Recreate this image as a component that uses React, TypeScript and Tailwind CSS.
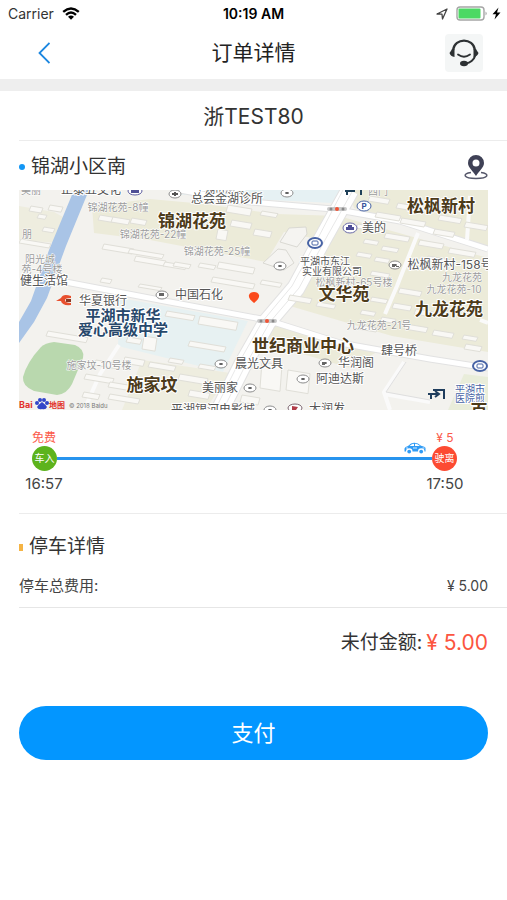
import { clsx } from 'clsx';

type Block = [x: number, y: number, w: number, h: number];

// buildings on the map, all of them lean the same way
const buildings: Block[] = [
  [31, 206, 12, 5], [50, 205, 13, 5], [39, 214, 8, 4], [44, 227, 11, 4],
  [21, 239, 30, 4], [100, 215, 15, 5], [113, 217, 17, 5], [132, 218, 15, 5],
  [104, 244, 30, 5], [130, 249, 34, 4], [136, 256, 30, 5], [165, 262, 22, 4],
  [102, 278, 10, 4], [140, 284, 22, 3], [219, 262, 36, 6], [213, 277, 42, 5],
  [262, 280, 20, 4], [228, 205, 24, 7], [232, 220, 20, 6], [255, 229, 17, 6],
  [262, 211, 16, 4], [218, 229, 10, 10], [175, 262, 16, 4], [200, 263, 16, 4],
  [370, 196, 20, 5], [398, 203, 22, 5], [377, 212, 24, 5], [402, 218, 24, 5],
  [440, 215, 22, 5], [466, 222, 22, 5], [435, 229, 20, 5], [386, 233, 24, 5],
  [358, 224, 14, 4], [365, 239, 14, 4], [383, 246, 16, 4], [358, 252, 14, 4],
  [376, 257, 14, 4], [420, 240, 24, 5], [450, 248, 26, 5], [428, 256, 22, 5],
  [372, 271, 18, 4], [400, 288, 22, 5], [372, 297, 16, 4], [394, 303, 18, 5],
  [416, 309, 20, 5], [362, 310, 14, 4], [382, 317, 14, 4], [406, 324, 22, 5],
  [434, 330, 20, 5], [464, 335, 14, 4], [466, 344, 16, 5], [360, 325, 18, 4],
  [167, 311, 28, 5], [200, 316, 38, 8], [190, 341, 36, 5], [128, 337, 14, 5],
  [48, 331, 40, 5], [144, 336, 13, 13], [96, 360, 24, 5], [125, 357, 20, 6],
  [86, 374, 28, 5], [110, 382, 24, 5], [150, 362, 26, 5], [180, 374, 28, 6],
  [190, 390, 20, 6], [110, 394, 30, 5], [84, 392, 16, 5], [262, 362, 20, 26],
  [288, 370, 22, 20], [242, 395, 18, 7], [170, 358, 14, 4], [200, 364, 16, 4],
  [290, 295, 22, 5], [318, 302, 18, 4],
];

type Label = {
  text: string;
  x: number;
  y: number;
  kind: 'area' | 'school' | 'place' | 'company' | 'block' | 'transit';
};

const labels: Label[] = [
  { text: '正泰五交化', x: 91, y: 194, kind: 'place' },
  { text: '平湖市慈善', x: 220, y: 193, kind: 'company' },
  { text: '总会金湖诊所', x: 227, y: 203, kind: 'place' },
  { text: '西门', x: 378, y: 195, kind: 'block' },
  { text: '美丽', x: 31, y: 194, kind: 'block' },
  { text: '锦湖花苑-8幢', x: 118, y: 211, kind: 'block' },
  { text: '锦湖花苑-22幢', x: 153, y: 238, kind: 'block' },
  { text: '锦湖花苑-25幢', x: 217, y: 255, kind: 'block' },
  { text: '朋', x: 27, y: 238, kind: 'block' },
  { text: '阳光城', x: 40, y: 263, kind: 'block' },
  { text: '苑-4号楼', x: 42, y: 273, kind: 'block' },
  { text: '健生活馆', x: 44, y: 285, kind: 'place' },
  { text: '锦湖花苑', x: 192, y: 227, kind: 'area' },
  { text: '松枫新村', x: 441, y: 212, kind: 'area' },
  { text: '美的', x: 374, y: 232, kind: 'place' },
  { text: '平湖市东江', x: 325, y: 265, kind: 'company' },
  { text: '实业有限公司', x: 332, y: 275, kind: 'company' },
  { text: '松枫新村-158号', x: 450, y: 269, kind: 'place' },
  { text: '九龙花苑', x: 462, y: 281, kind: 'block' },
  { text: '九龙花苑-10', x: 454, y: 293, kind: 'block' },
  { text: '松枫新村-65号楼', x: 354, y: 286, kind: 'block' },
  { text: '文华苑', x: 344, y: 300, kind: 'area' },
  { text: '九龙花苑', x: 449, y: 315, kind: 'area' },
  { text: '九龙花苑-21号', x: 379, y: 329, kind: 'block' },
  { text: '中国石化', x: 199, y: 299, kind: 'place' },
  { text: '华夏银行', x: 103, y: 305, kind: 'place' },
  { text: '平湖市新华', x: 123, y: 321, kind: 'school' },
  { text: '爱心高级中学', x: 123, y: 335, kind: 'school' },
  { text: '世纪商业中心', x: 303, y: 352, kind: 'area' },
  { text: '肆号桥', x: 399, y: 355, kind: 'place' },
  { text: '晨光文具', x: 259, y: 368, kind: 'place' },
  { text: '华润阁', x: 356, y: 367, kind: 'place' },
  { text: '阿迪达斯', x: 340, y: 383, kind: 'place' },
  { text: '施家坟-10号楼', x: 99, y: 369, kind: 'block' },
  { text: '施家坟', x: 152, y: 391, kind: 'area' },
  { text: '美丽家', x: 220, y: 392, kind: 'place' },
  { text: '平湖市', x: 470, y: 393, kind: 'transit' },
  { text: '医院煎', x: 470, y: 402, kind: 'transit' },
  { text: '平湖银河电影城', x: 213, y: 414, kind: 'place' },
  { text: '大润发', x: 327, y: 413, kind: 'place' },
  { text: '百', x: 479, y: 417, kind: 'area' },
];

const pois = [
  [175, 194], [287, 193], [280, 266], [395, 265], [162, 295],
  [221, 364], [325, 363], [303, 379], [250, 388], [270, 410],
];

const stations = [[315, 243], [480, 366]];

function MapView() {
  return (
    <svg
      viewBox="19 190 469 220"
      className="block w-full"
      role="img"
      aria-label="锦湖小区南地图"
    >
      <rect x="19" y="190" width="469" height="220" fill="#f3f2ee" />
      <path d="M170 190H342L333 203L250 199L170 194Z" fill="#e6f1f3" />
      <path d="M92 206L150 199L205 204L276 214L340 216L312 238L284 232L266 262L150 240L94 233Z" fill="#ecebd9" />
      <path d="M348 190H488V248L354 208ZM335 215L488 258V352L392 336L290 306Z" fill="#ecebd9" />
      <path d="M19 206L54 212L72 222L58 243L19 240Z" fill="#eeeddf" />
      <path d="M120 298L248 321L223 372L118 346Z" fill="#e7f1f2" />
      <path d="M276 325L380 350L350 368L262 342Z" fill="#ecebd9" />
      <path d="M142 360L230 373L205 410H122Z" fill="#eeeddf" />
      <path d="M464 374L488 377V410H448Z" fill="#e9edda" />

      <path d="M74 190H89L66 246L47 298L34 322L19 343V322L31 301L49 250Z" fill="#a9c4e6" />
      <path d="M41 347Q45 343 54 342L75 345Q85 349 83 358L72 384Q67 394 57 395L34 391Q22 386 23 377Q27 362 41 347Z" fill="#b9d8ae" />

      <g fill="none" strokeLinejoin="round">
        <path d="M350 190L322 240L296 288L267 322L242 366L220 410" stroke="#e2e2e2" strokeWidth="19" />
        <path d="M50 279L170 302L267 320L340 343L430 359L488 368M180 190L240 201L333 209L400 221L488 249" stroke="#e2e2e2" strokeWidth="7" />
        <path d="M350 190L322 240L296 288L267 322L242 366L220 410" stroke="#fff" strokeWidth="17" />
        <path d="M50 279L170 302L267 320L340 343L430 359L488 368M180 190L240 201L333 209L400 221L488 249" stroke="#fff" strokeWidth="5" />
        <path d="M353 190L325 240L299 288L270 322L245 366L223 410" stroke="#e8e8e8" strokeWidth="1" />
        <path d="M343 190L317 240L292 286L262 322L237 366L215 410" stroke="#e8e8e8" strokeWidth="1" />
        <path d="M418 233L397 286L385 314M470 196L467 240M404 362L384 392L390 410M480 320L488 323M384 394L430 402M119 345L100 374L84 410" stroke="#fafafa" strokeWidth="4" />
        <path d="M406 362L386 392L430 400" stroke="#dfdfdf" strokeWidth="1" />
      </g>
      <path d="M289 228L306 227L307 234L297 247L280 242ZM278 249L286 250L294 263L284 270L263 263Z" fill="#f5f4f1" stroke="#dad9d3" />

      <g fill="#f9f8f5" stroke="#e0dfd8" strokeWidth="1">
        {buildings.map(([x, y, w, h]) => (
          <path key={`${x}-${y}`} d={`M${x} ${y}l${w} ${w / 6}l-2 ${h}l-${w} -${w / 6}z`} />
        ))}
      </g>

      {pois.map(([x, y]) => (
        <g key={`${x}-${y}`}>
          <ellipse cx={x} cy={y} rx="6" ry="4" fill="#fff" stroke="#8c8c8c" />
          <ellipse cx={x} cy={y} rx="2" ry="1" fill="#555" />
        </g>
      ))}
      <path d="M172 194H178M175 192V196" stroke="#555" strokeWidth="2" />
      <path d="M392 264h3v3h-3zM396 266h3v1h-3zM159 293h5v3h-5zM322 362h3v3h-3z" fill="#666" />

      {stations.map(([x, y]) => (
        <g key={`${x}-${y}`}>
          <ellipse cx={x} cy={y} rx="7" ry="5" fill="#fff" stroke="#4763a5" strokeWidth="2" />
          <rect x={x - 3} y={y - 2} width="6" height="4" rx="1" fill="none" stroke="#4763a5" />
        </g>
      ))}

      <ellipse cx="364" cy="206" rx="7" ry="5" fill="#fff" stroke="#4763a5" />
      <text x="364" y="209" textAnchor="middle" className="fill-[#35539b] text-[8px] font-bold">P</text>
      <ellipse cx="350" cy="228" rx="7" ry="5" fill="#fff" stroke="#6a6aa8" />
      <path d="M346 227h8v3h-8zM348 225h4v2h-4z" fill="#4e4e96" />
      <ellipse cx="135" cy="191" rx="7" ry="4" fill="#fff" stroke="#5d5da0" />
      <path d="M131 190h8v3h-8z" fill="#4e4e96" />
      <ellipse cx="295" cy="408" rx="7" ry="4" fill="#fff" stroke="#7c6670" />
      <path d="M292 406l6 1l-2 3h-4z" fill="#b23c48" />

      {[[337, 209], [267, 321]].map(([x, y]) => (
        <g key={x}>
          <rect x={x - 10} y={y - 2} width="20" height="4" rx="2" fill="#c9c9c9" />
          <circle cx={x - 6} cy={y} r="1.5" fill="#8a8a8a" />
          <circle cx={x} cy={y} r="2" fill="#f05436" />
          <circle cx={x + 6} cy={y} r="1.5" fill="#8a8a8a" />
        </g>
      ))}

      <path d="M71 296Q63 293 61 298L56 301H61Q62 306 71 305V303Q65 303 65 300Q65 298 71 298Z" fill="#e8502e" />
      <path d="M66 299h5v3h-5z" fill="#8a3a24" />
      <path d="M345 191h10M347 191v4M361 190v5" stroke="#1f4058" strokeWidth="2" />
      <path d="M433 390H444V399M428 394H438M435 391L439 394L435 397M431 394V399" fill="none" stroke="#1f3d5c" strokeWidth="2" />

      <g textAnchor="middle" stroke="#fff" paintOrder="stroke" strokeLinejoin="round">
        {labels.map(({ text, x, y, kind }) => (
          <text
            key={`${text}-${y}`}
            x={x}
            y={y}
            strokeWidth={kind === 'block' ? 1 : 2}
            className={clsx(
              kind === 'area' && 'fill-[#4d3b1a] text-[17px] font-bold',
              kind === 'school' && 'fill-[#27486b] text-[15px] font-bold',
              kind === 'place' && 'fill-[#555] text-[12px]',
              kind === 'company' && 'fill-[#555] text-[10px]',
              kind === 'block' && 'fill-[#9b9b9b] text-[10px]',
              kind === 'transit' && 'fill-[#4763a5] text-[10px]',
            )}
          >
            {text}
          </text>
        ))}
      </g>

      <path d="M254 303Q248 298 249 295Q250 292 254 292Q258 292 259 295Q260 298 254 303Z" fill="#fb4a1c" />

      <text x="19" y="408" className="fill-[#e2322b] text-[9px] font-bold">Bai</text>
      <g fill="#3347c9">
        <ellipse cx="37" cy="403" rx="2" ry="2" />
        <ellipse cx="40" cy="400" rx="2" ry="2" />
        <ellipse cx="44" cy="400" rx="2" ry="2" />
        <ellipse cx="47" cy="403" rx="2" ry="2" />
        <path d="M42 402Q46 405 47 407Q46 410 42 409Q38 410 37 407Q38 405 42 402Z" />
      </g>
      <text x="49" y="408" className="fill-[#e2322b] text-[8px] font-bold">地图</text>
      <text x="69" y="408" className="fill-[#777] text-[6px]">© 2018 Baidu</text>
    </svg>
  );
}

function StatusBar() {
  return (
    <div className="flex h-[27px] items-center px-2 text-[14px] text-black">
      <div className="flex flex-1 items-center gap-2">
        <span className="text-[#333]">Carrier</span>
        <svg viewBox="0 0 18 13" className="h-[13px] w-[18px]" aria-hidden="true">
          <g fill="none" stroke="#000" strokeWidth="2.4">
            <path d="M1.2 4.8Q9 -1.8 16.8 4.8" />
            <path d="M4 7.8Q9 3.4 14 7.8" />
          </g>
          <path d="M6 9.8Q9 7.4 12 9.8L9 12.8Z" />
        </svg>
      </div>
      <span className="font-semibold">10:19 AM</span>
      <div className="flex flex-1 items-center justify-end">
        <svg viewBox="0 0 12 12" className="mr-2 h-3 w-3" aria-hidden="true">
          <path d="M1 6L11 1L6.5 11L6 6.2Z" fill="none" stroke="#444" strokeWidth="1.3" strokeLinejoin="round" />
        </svg>
        <svg viewBox="0 0 32 15" className="h-[15px] w-8" aria-hidden="true">
          <rect x="1" y="1" width="27" height="13" rx="3" fill="#fff" stroke="#a5a5a5" strokeWidth="1.4" />
          <rect x="2.5" y="2.5" width="22" height="10" rx="1" fill="#4cd964" />
          <path d="M29.5 5.5Q32 7.5 29.5 9.5Z" fill="#a5a5a5" />
        </svg>
        <svg viewBox="0 0 9 13" className="ml-1 -mr-[2px] h-[13px] w-[9px]" aria-hidden="true">
          <path d="M6.5 0.5L0.5 7.3H4L2.5 12.5L8.5 5.5H5Z" />
        </svg>
      </div>
    </div>
  );
}

function HeadsetIcon() {
  return (
    <svg viewBox="0 0 30 28" className="h-7 w-[30px]" aria-hidden="true">
      <g fill="none" stroke="#2d3133" strokeLinecap="round">
        <path d="M4 11C6 -1.5 24 -1.5 26 11" strokeWidth="2.2" />
        <path d="M26 17C25 21 21 24 17 24.5" strokeWidth="2" />
        <path d="M9 15.5Q15 20 21 15.5" strokeWidth="1.8" />
      </g>
      <path d="M5.5 10V18Q1.500 17.500 0.500 14Q2 12 3 10ZM24.5 10V18Q28.500 17.500 29.500 14Q28 12 27 10Z" fill="#2d3133" />
      <ellipse cx="15" cy="24.5" rx="4" ry="2.8" fill="#2d3133" />
    </svg>
  );
}

function CarIcon() {
  return (
    <svg viewBox="0 0 22 12" className="h-3 w-[22px]" aria-hidden="true">
      <path d="M0.5 6.5Q1 4.5 4 4Q7 0.8 10 0.7Q14 0.5 17 3.8Q21 4.5 21.5 6V9.500H20.500A3.2 3.2 0 0 0 14 9.500H8.500A3.2 3.2 0 0 0 2 9.500H0.500Z" fill="#2f9bf5" />
      <path d="M5.500 4Q8 1.800 10 1.700V4ZM11 1.700Q13.500 1.700 16 4H11Z" fill="#fff" />
      <path d="M2 6h2M18.500 6h2M9 6h4" stroke="#fff" strokeWidth="0.8" />
      <circle cx="5.200" cy="9.600" r="1.900" fill="#2f9bf5" />
      <circle cx="17.200" cy="9.600" r="1.900" fill="#2f9bf5" />
    </svg>
  );
}

function Header() {
  return (
    <header className="border-b-[12px] border-[#eee]">
      <StatusBar />
      <div className="flex h-[52px] items-center px-6">
        <div className="flex flex-1">
          <button type="button" aria-label="返回" className="flex h-10 w-10 items-center justify-center">
            <svg viewBox="0 0 12 22" className="h-[22px] w-3" aria-hidden="true">
              <path d="M11.5 1L1.5 11L11.5 21" fill="none" stroke="#1c87e0" strokeWidth="1.8" />
            </svg>
          </button>
        </div>
        <h1 className="text-[21px] text-[#222]">订单详情</h1>
        <div className="flex flex-1 justify-end">
          <button
            type="button"
            aria-label="客服"
            className="flex h-[38px] w-[38px] items-center justify-center rounded bg-[#f4f6f6]"
          >
            <HeadsetIcon />
          </button>
        </div>
      </div>
    </header>
  );
}

function Timeline() {
  return (
    <div className="pt-5 pr-[42px] pb-5 pl-6">
      <div className="flex justify-between text-[12px] leading-4 text-[#fb5a4a]">
        <span className="w-10 text-center">免费</span>
        <span className="w-10 text-center">¥ 5</span>
      </div>
      <div className="relative flex items-center px-2">
        <span className="flex h-[25px] w-[25px] shrink-0 items-center justify-center rounded-full bg-[#5db31c] text-[10px] text-white">
          车入
        </span>
        <span className="h-[3px] flex-1 bg-[#2794ee]" />
        <span className="flex h-[25px] w-[25px] shrink-0 items-center justify-center rounded-full bg-[#fc4b32] text-[10px] text-white">
          驶离
        </span>
        <span className="absolute -top-1 right-[39px]">
          <CarIcon />
        </span>
      </div>
      <div className="flex justify-between pt-[3px] text-[15px] leading-[19px] text-[#444]">
        <span className="w-10 text-center">16:57</span>
        <span className="w-10 text-center">17:50</span>
      </div>
    </div>
  );
}

export default function App() {
  return (
    <div className="min-h-screen bg-white font-['Inter','Noto_Sans_CJK_SC',sans-serif] text-[#333]">
      <Header />

      <main>
        <p className="flex h-[49px] items-center justify-center pt-[2px] text-[21px]">浙TEST80</p>

        <section className="ml-[19px] border-y border-[#ececec]">
          <div className="flex h-[49px] items-center pt-[3px] pr-[18px]">
            <span className="mr-[6px] h-[6px] w-[6px] rounded-full bg-[#1296f5]" />
            <h2 className="flex-1 text-[19px]">锦湖小区南</h2>
            <button type="button" aria-label="导航">
              <svg viewBox="0 0 26 26" className="h-[26px] w-[26px]" aria-hidden="true">
                <path d="M13 1A8 8 0 0 0 5 9C5 13.5 10 17 13 22C16 17 21 13.5 21 9A8 8 0 0 0 13 1ZM13 5.5A3.5 3.5 0 1 1 13 12.5A3.5 3.5 0 1 1 13 5.5Z" fill="#3f4156" />
                <path d="M8 18.5C-1 19.5 0 24.5 13 24.5S27 19.5 18 18.5" fill="none" stroke="#55576a" strokeWidth="1.5" />
              </svg>
            </button>
          </div>
          <div className="pr-[19px]">
            <MapView />
          </div>
          <div className="-ml-[19px]">
            <Timeline />
          </div>
        </section>

        <section className="ml-[19px] border-b border-[#e6e6e6]">
          <div className="flex h-[62px] items-center pt-1">
            <span className="mr-[6px] h-[7px] w-1 bg-[#f5b444]" />
            <h2 className="text-[19px]">停车详情</h2>
          </div>
          <div className="flex items-start justify-between pr-[19px] pb-[11px] text-[15px] leading-5 text-[#444]">
            <span>停车总费用:</span>
            <span className="text-[14px]">¥ 5.00</span>
          </div>
        </section>

        <p className="flex items-center justify-end gap-1 px-[19px] pt-[21px] text-[19px] leading-7">
          未付金额:
          <span className="text-[21px] text-[#fc5540]">¥ 5.00</span>
        </p>

        <div className="px-[19px] pt-[49px]">
          <button type="button" className="h-[54px] w-full rounded-full bg-[#0396ff] text-[22px] text-white">
            支付
          </button>
        </div>
      </main>
    </div>
  );
}
